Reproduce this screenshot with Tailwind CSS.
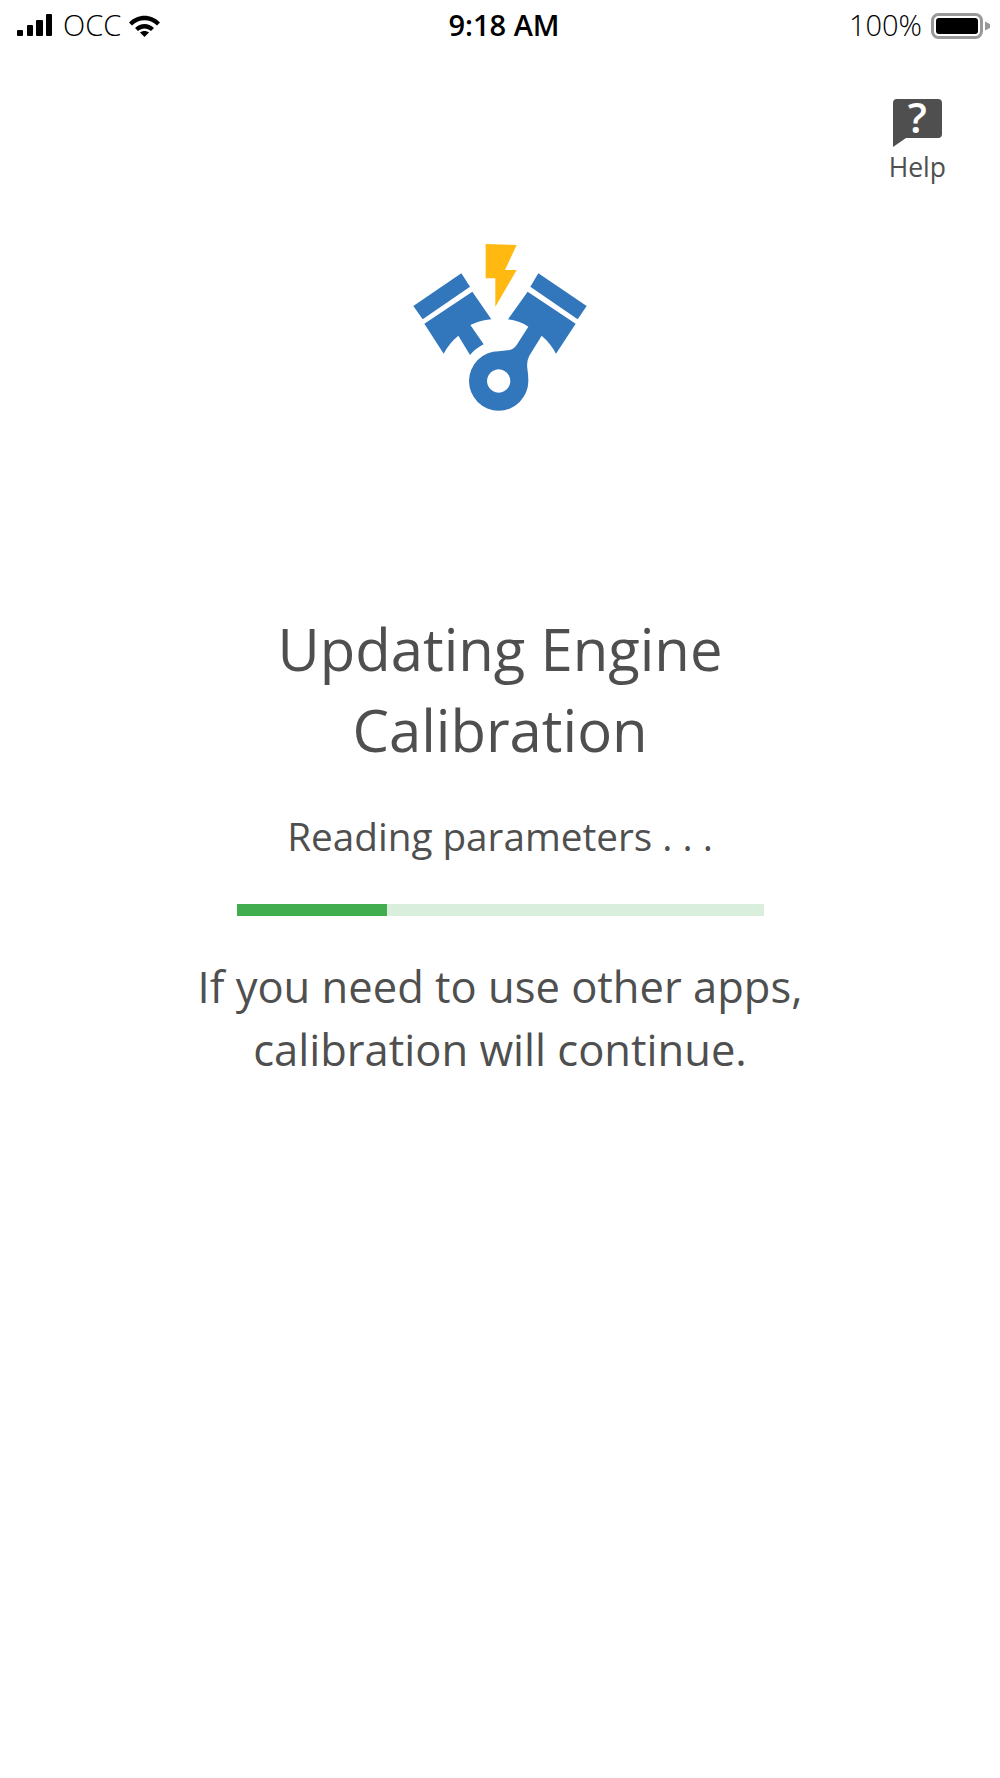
<!DOCTYPE html>
<html lang="en">
<head>
    <meta charset="UTF-8">
    <meta name="viewport" content="width=device-width, initial-scale=1.0">
    <title>Updating Engine Calibration</title>
    <script src="https://cdn.jsdelivr.net/npm/@tailwindcss/browser@4"></script>
</head>
<body class="bg-white font-['Open_Sans',sans-serif] text-[#4f4f4f]">
    <div class="w-[1000px] h-[1778px] flex flex-col overflow-hidden">
        <!-- Status bar -->
        <div class="grid grid-cols-[1fr_1fr_1fr] items-center h-[52px] pl-[17px] pr-[10px] text-black text-[29px]">
            <div class="flex items-center">
                <svg width="36" height="24" viewBox="0 0 36 24" fill="#000">
                    <rect x="0" y="16" width="6" height="6" rx="1"/>
                    <rect x="10" y="11" width="6" height="11" rx="1"/>
                    <rect x="19" y="6" width="7" height="16" rx="1"/>
                    <rect x="29" y="0" width="6" height="22" rx="1"/>
                </svg>
                <span class="ml-[10px] mb-[2px] font-light">OCC</span>
                <svg class="ml-[8px]" width="31" height="22" viewBox="0 0 31 22" fill="#000">
                    <path d="M0 7.500C8.500 -1.500 22.500 -1.500 31 7.500L28 10.500C21 3.500 10 3.500 3 10.500Z"/>
                    <path d="M6 13C11.500 7.500 19.500 7.500 25 13L22 16C18 12.500 13 12.500 9 16Z"/>
                    <path d="M11 17.500C13.500 15.500 17.500 15.500 20 17.500L15.500 22Z"/>
                </svg>
            </div>
            <div class="text-center font-semibold pl-[1px] pb-[2px]">9:18 AM</div>
            <div class="flex items-center justify-end">
                <span class="mb-[2px] font-light">100%</span>
                <svg class="ml-[9px]" width="59" height="26" viewBox="0 0 59 26">
                    <rect x="1.500" y="1.500" width="49" height="23" rx="6" fill="none" stroke="#999" stroke-width="3"/>
                    <rect x="5" y="5" width="42" height="16" rx="3" fill="#000"/>
                    <path d="M54 8.500L59 11V15L54 17.500Z" fill="#999"/>
                </svg>
            </div>
        </div>

        <!-- Help -->
        <div class="flex justify-end pr-[54px] mt-[47px]">
            <div class="flex flex-col items-center">
                <div class="relative w-[49px] h-[48px]">
                    <svg width="49" height="48" viewBox="0 0 49 48">
                        <path d="M4 0H45A4 4 0 0 1 49 4V35A4 4 0 0 1 45 39H13L0 48V4A4 4 0 0 1 4 0Z" fill="#4f4f4f"/>
                    </svg>
                    <span class="absolute left-0 top-0 w-full text-center text-white text-[42px] leading-[36px] font-semibold">?</span>
                </div>
                <span class="text-[26.500px] leading-[36px] mt-[2px]">Help</span>
            </div>
        </div>

        <!-- Logo -->
        <div class="flex justify-center mt-[40px]">
            <svg width="220" height="200" viewBox="0 0 660 600">
                <path d="M287 57L380 60L345 135H380L316 245V160H287Z" fill="#ffb911"/>
                <g fill="#3276bb">
                    <path d="M214 145L240 185L98 283L70 243Z"/>
                    <path d="M247 200L304 283Q268 287 241 300L281 358Q257 370 240 390L205 332Q177 355 161 386L103 296Z"/>
                    <path d="M445 145L590 243L563 283L421 185Z"/>
                    <path fill-rule="evenodd" d="M413 200L557 296L498 386Q482 355 455 332L418 392Q409 408 412 430Q415 450 415 468A89 89 0 1 1 326 379Q340 377 352 376Q370 375 380 360L415 305Q388 287 354 283ZM326 433A35 35 0 1 0 326.010 433Z"/>
                </g>
            </svg>
        </div>

        <!-- Progress copy -->
        <div class="flex flex-col items-center mt-[183px]">
            <h1 class="text-[58px] leading-[81px] text-center w-[600px]">Updating Engine Calibration</h1>
            <p class="text-[38.700px] leading-[52px] mt-[40px]">Reading parameters . . .</p>
            <div class="w-[527px] h-[12px] bg-[#d9eedc] mt-[42px]">
                <div class="w-[150px] h-full bg-[#41ad4f]"></div>
            </div>
            <p class="text-[43.500px] leading-[63px] text-center mt-[39px]">If you need to use other apps,<br>calibration will continue.</p>
        </div>
    </div>
</body>
</html>
